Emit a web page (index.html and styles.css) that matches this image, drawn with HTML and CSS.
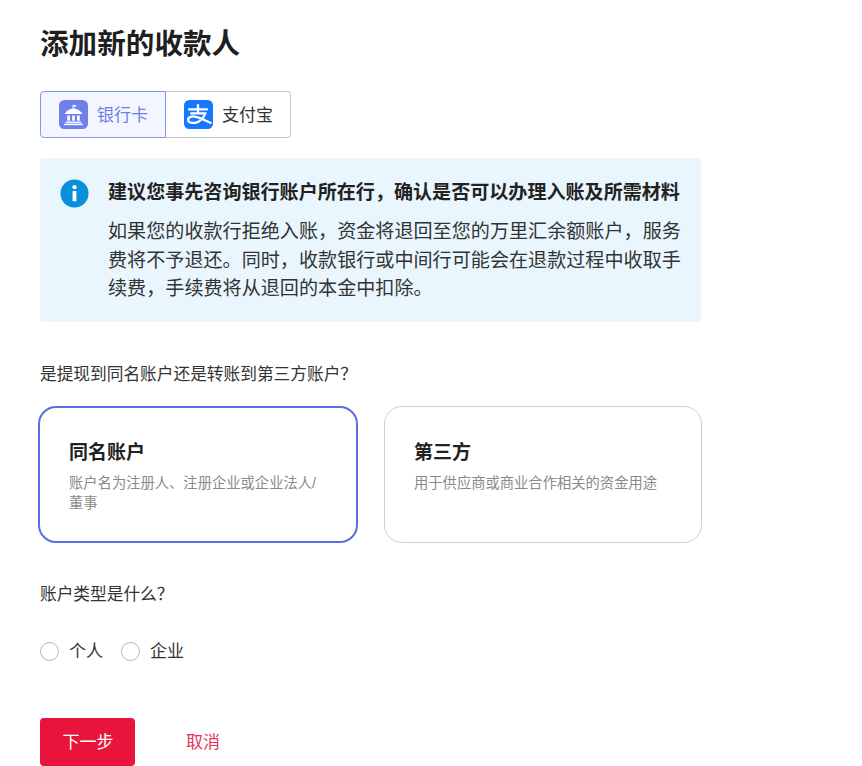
FILE: index.html
```html
<!DOCTYPE html>
<html lang="zh-CN">
<head>
<meta charset="utf-8">
<title>添加新的收款人</title>
<link rel="stylesheet" href="styles.css">
</head>
<body>
<main class="page">
  <h1 class="title">添加新的收款人</h1>
  <div class="tabs">
    <div class="tab active">
      <svg class="tab-icon" viewBox="0 0 28 28"><rect width="28" height="28" rx="5" fill="#6f80ec"/><path d="M13.700 4.500v4" fill="none" stroke="#fff" stroke-width="1"/><path d="M14 4.500l3.500 1.300-3.500 1.300z" fill="#fff"/><path d="M5.500 13.500c1.500-3 5-5.300 8.500-5.300s7 2.300 8.500 5.300z" fill="#fff"/><rect x="8" y="15" width="2.600" height="5" fill="#fff"/><rect x="12.700" y="15" width="2.600" height="5" fill="#fff"/><rect x="17.400" y="15" width="2.600" height="5" fill="#fff"/><rect x="6.500" y="20.800" width="15" height="1.300" fill="#fff"/><rect x="5" y="22.800" width="18" height="1.500" fill="#fff"/></svg>
      <span class="tab-label">银行卡</span>
    </div>
    <div class="tab">
      <svg class="tab-icon" viewBox="0 0 28 28"><rect width="28" height="28" rx="5" fill="#1677ff"/><path d="M4 9h19M13.500 4v8M6 13h14.500c-1.500 4.500-5 8-9.500 9-3.500.6-7-.4-7-2.800 0-2.700 3.500-4 7.500-3 4.500 1 10 3.800 15 6.300" fill="none" stroke="#fff" stroke-width="2.200"/></svg>
      <span class="tab-label">支付宝</span>
    </div>
  </div>
  <section class="notice">
    <svg class="notice-icon" viewBox="0 0 30 30"><circle cx="15" cy="15" r="14.500" fill="#0a8fdc"/><circle cx="15" cy="8.500" r="2.200" fill="#fff"/><rect x="13" y="12.500" width="4" height="10.500" rx=".6" fill="#fff"/></svg>
    <div class="notice-body">
      <p class="notice-title">建议您事先咨询银行账户所在行，确认是否可以办理入账及所需材料</p>
      <p class="notice-text">如果您的收款行拒绝入账，资金将退回至您的万里汇余额账户，服务费将不予退还。同时，收款银行或中间行可能会在退款过程中收取手续费，手续费将从退回的本金中扣除。</p>
    </div>
  </section>
  <p class="question q-first">是提现到同名账户还是转账到第三方账户？</p>
  <div class="cards">
    <div class="card selected">
      <h2 class="card-title">同名账户</h2>
      <p class="card-desc">账户名为注册人、注册企业或企业法人/董事</p>
    </div>
    <div class="card">
      <h2 class="card-title">第三方</h2>
      <p class="card-desc">用于供应商或商业合作相关的资金用途</p>
    </div>
  </div>
  <p class="question q-second">账户类型是什么？</p>
  <div class="radios">
    <label class="radio"><span class="radio-dot"></span>个人</label>
    <label class="radio"><span class="radio-dot"></span>企业</label>
  </div>
  <div class="actions">
    <button class="btn-primary" type="button">下一步</button>
    <button class="btn-link" type="button">取消</button>
  </div>
</main>
</body>
</html>
```

FILE: styles.css
```css
* { box-sizing: border-box; }
html, body { margin: 0; height: 100%; }
body {
  background: #fff;
  color: #222;
  font-family: "Liberation Sans", "Noto Sans CJK SC", sans-serif;
  overflow: hidden;
}
.page { width: 661px; margin-left: 40px; padding-top: 24px; }
.title { margin: 0; padding-top: 1px; font-size: 28.600px; line-height: 38px; font-weight: 700; color: #1f1f1f; }
.tabs { display: flex; margin-top: 28px; width: 251px; height: 47px; }
.tab {
  display: flex; align-items: center; gap: 9px; flex: 0 0 125px;
  padding-left: 18px; font-size: 17px; color: #333;
  border: 1px solid #c8c8cc; border-left: 0; border-radius: 0 4px 4px 0;
}
.tab.active {
  flex: 0 0 126px; color: #6f7fe0; background: #f4f6ff;
  border: 1px solid #8896ee; border-radius: 4px 0 0 4px;
}
.tab-label { padding-bottom: 3px; }
.tab-icon { width: 29px; height: 29px; flex: none; }
.notice {
  display: flex; gap: 19px; margin-top: 20px; height: 164px;
  padding: 21px 20px 0; background: #e9f6fd; border-radius: 4px;
}
.notice-icon { width: 29px; height: 29px; flex: none; }
.notice-body { flex: 1; min-width: 0; }
.notice-title { margin: 0; font-size: 19.070px; line-height: 28px; font-weight: 700; color: #222; white-space: nowrap; }
.notice-text { margin: 11px 0 0; font-size: 19.100px; line-height: 28.500px; color: #333; }
.question { margin: 0; font-size: 16.700px; line-height: 24px; color: #333; }
.q-first { margin-top: 41px; }
.cards { display: flex; gap: 26px; margin-top: 19px; margin-left: -2px; }
.card {
  flex: none; width: 318px; height: 137px; padding: 32px 29px 0;
  border: 1px solid #cfcfcf; border-radius: 18px; background: #fff;
}
.card.selected { width: 320px; border: 2px solid #5b6fe0; padding: 31px 29px 0; }
.card-title { margin: 0; padding-top: 1px; font-size: 19px; line-height: 26px; font-weight: 700; color: #222; }
.card-desc { margin: 7px 0 0; font-size: 14.300px; line-height: 20px; color: #8a8a8a; }
.q-second { margin-top: 40px; }
.radios { display: flex; gap: 18px; margin-top: 33px; }
.radio { display: flex; align-items: center; gap: 10px; font-size: 17px; line-height: 24px; color: #333; }
.radio-dot { width: 19px; height: 19px; margin-bottom: 1px; border: 1px solid #b5b5b5; border-radius: 50%; }
.actions { display: flex; align-items: center; gap: 34px; margin-top: 54px; }
.btn-primary {
  width: 95px; height: 48px; padding: 0 0 4px 1px; border: 0; border-radius: 4px; background: #e8143c;
  color: #fff; font: inherit; font-size: 17px;
}
.btn-link {
  border: 0; padding: 0 17px 4px; background: none; color: #e8335a; font: inherit; font-size: 17px;
}
```
